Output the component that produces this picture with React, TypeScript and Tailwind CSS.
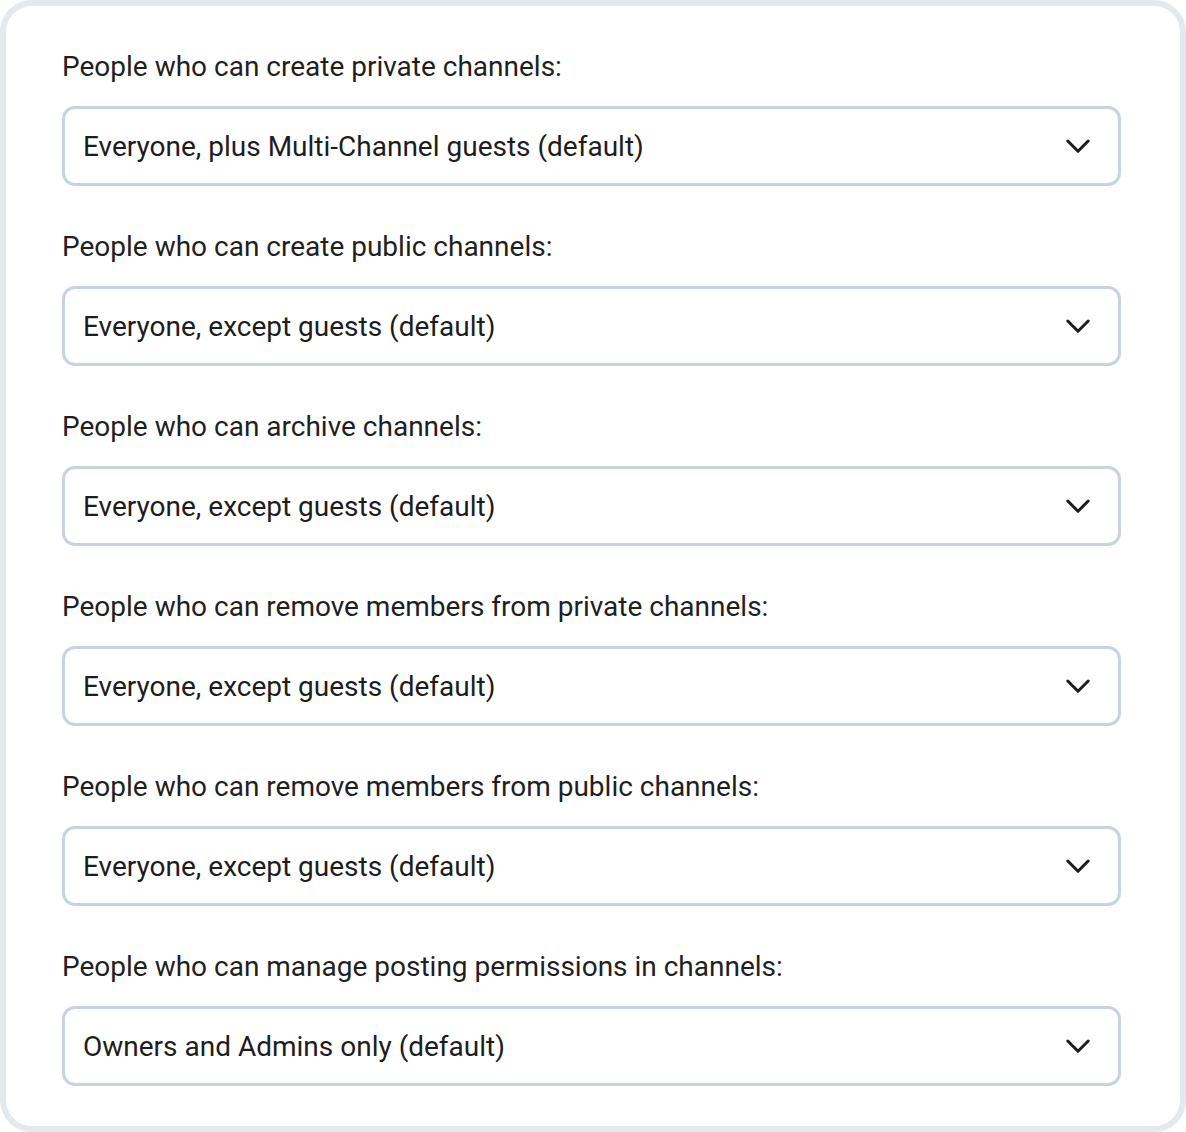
import React from "react";

const rows = [
  ["People who can create private channels:", "Everyone, plus Multi-Channel guests (default)"],
  ["People who can create public channels:", "Everyone, except guests (default)"],
  ["People who can archive channels:", "Everyone, except guests (default)"],
  ["People who can remove members from private channels:", "Everyone, except guests (default)"],
  ["People who can remove members from public channels:", "Everyone, except guests (default)"],
  ["People who can manage posting permissions in channels:", "Owners and Admins only (default)"],
];

function Chevron() {
  return (
    <svg width="24" height="15" viewBox="0 0 24 15" fill="none" className="shrink-0">
      <polyline
        points="1.8,2 12,12.3 22.2,2"
        stroke="#1d1d1d"
        strokeWidth="3"
        strokeLinecap="round"
        strokeLinejoin="round"
      />
    </svg>
  );
}

export default function App() {
  return (
    <div
      className="w-[1186px] h-[1132px] bg-white"
      style={{ fontFamily: "Roboto, 'Liberation Sans', sans-serif" }}
    >
      <div className="h-full box-border border-[6px] border-[#e4e9ed] rounded-[32px] pt-[46px] pl-[56px] pr-[59px] flex flex-col gap-[46px]">
        {rows.map(([label, value], i) => (
          <div key={i} className="flex flex-col gap-[24px]">
            <div className="text-[28px] leading-[30px] text-[#1f1f1f]">{label}</div>
            <div className="h-[80px] box-border border-[3px] border-[#c8d4dc] rounded-[13px] flex items-center justify-between pl-[18px] pr-[28px] bg-white">
              <span className="text-[28px] leading-[30px] pt-[2px] text-[#1d1d1d]">{value}</span>
              <Chevron />
            </div>
          </div>
        ))}
      </div>
    </div>
  );
}
